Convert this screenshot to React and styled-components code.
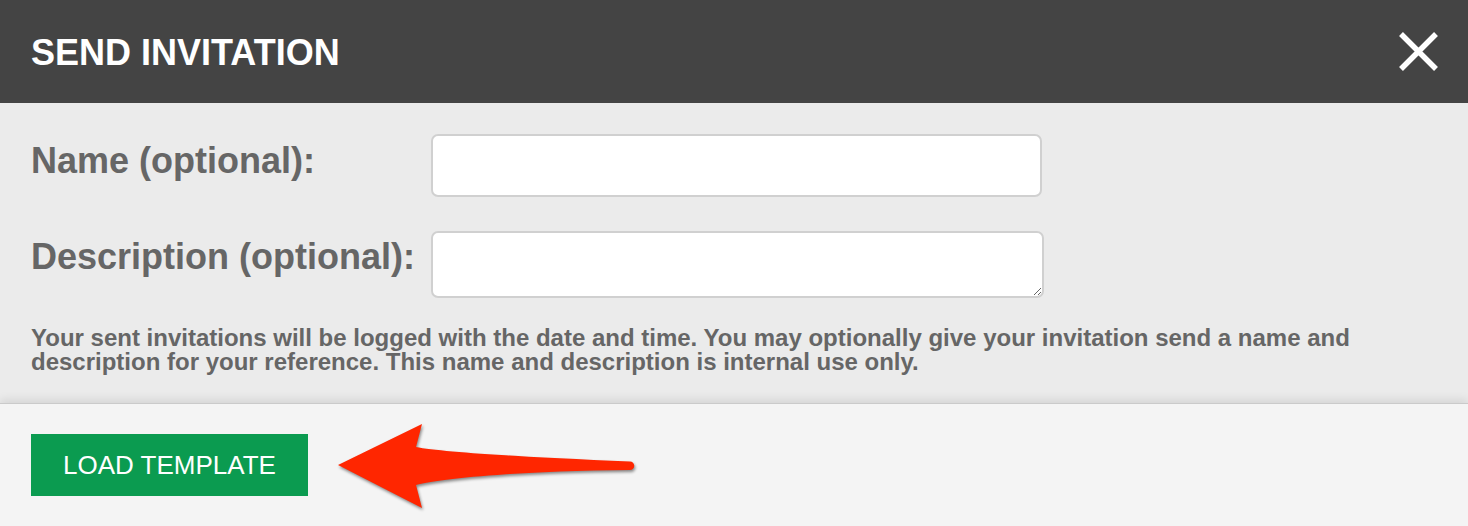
import React from 'react';
import styled, { createGlobalStyle } from 'styled-components';

const GlobalStyle = createGlobalStyle`
  html, body {
    margin: 0;
    padding: 0;
    background: #f4f4f4;
  }
  body {
    font-family: "Liberation Sans", Arial, Helvetica, sans-serif;
  }
`;

const Modal = styled.div`
  width: 1468px;
  height: 526px;
  display: flex;
  flex-direction: column;
  overflow: hidden;
`;

const Header = styled.header`
  height: 103px;
  flex-shrink: 0;
  box-sizing: border-box;
  padding: 3px 29px 0 31px;
  background: #444444;
  display: flex;
  align-items: center;
  justify-content: space-between;
`;

const Title = styled.h1`
  margin: 0;
  font-size: 36px;
  font-weight: 700;
  color: #ffffff;
`;

const CloseButton = styled.button`
  width: 41px;
  height: 41px;
  padding: 0;
  margin-top: -3px;
  border: none;
  background: transparent;
  cursor: pointer;
  display: flex;

  svg {
    display: block;
  }
`;

const Body = styled.section`
  flex-shrink: 0;
  background: #ebebeb;
  padding: 31px 31px 29px 31px;
`;

const Form = styled.div`
  display: grid;
  grid-template-columns: max-content auto;
  column-gap: 16px;
  row-gap: 34px;
  align-items: start;
`;

const Label = styled.label`
  font-size: 36px;
  font-weight: 700;
  color: #666666;
  padding-top: ${props => props.offset}px;
  line-height: 1.15;
`;

const fieldBase = `
  box-sizing: border-box;
  border: 2px solid #d0d0d0;
  border-radius: 7px;
  background: #ffffff;
  font-family: "Liberation Sans", Arial, sans-serif;
  font-size: 20px;
  padding: 8px 12px;
  outline: none;
  margin: 0;
  display: block;
`;

const TextInput = styled.input`
  ${fieldBase}
  width: 611px;
  height: 63px;
`;

const TextArea = styled.textarea`
  ${fieldBase}
  width: 613px;
  height: 67px;
  resize: both;
`;

const HelpText = styled.p`
  margin: 28px 0 0 0;
  font-size: 24px;
  line-height: 24px;
  font-weight: 700;
  color: #666666;
`;

const Footer = styled.footer`
  flex: 1;
  background: #f4f4f4;
  border-top: 1px solid #cacaca;
  box-shadow: 0 -3px 9px rgba(0, 0, 0, 0.1);
  padding: 0 31px;
  display: flex;
  align-items: center;
  gap: 28px;
`;

const PrimaryButton = styled.button`
  width: 277px;
  height: 62px;
  border: none;
  border-radius: 0;
  background: #0b9b50;
  color: #ffffff;
  font-family: "Liberation Sans", Arial, sans-serif;
  font-size: 26px;
  font-weight: 400;
  text-transform: uppercase;
  cursor: pointer;
  padding: 0;
`;

const Arrow = styled.svg`
  width: 300px;
  height: 90px;
  display: block;
  filter: drop-shadow(1px 2px 1.5px rgba(0, 0, 0, 0.45));
`;

const CloseIcon = () => (
  <svg width="41" height="41" viewBox="0 0 41 41">
    <path d="M3 3 L38 38 M38 3 L3 38" stroke="#ffffff" strokeWidth="5.5" strokeLinecap="butt" />
  </svg>
);

const App = () => {
  return (
    <>
      <GlobalStyle />
      <Modal>
        <Header>
          <Title>SEND INVITATION</Title>
          <CloseButton aria-label="Close">
            <CloseIcon />
          </CloseButton>
        </Header>
        <Body>
          <Form>
            <Label offset={6} htmlFor="inv-name">Name (optional):</Label>
            <TextInput id="inv-name" type="text" />
            <Label offset={5} htmlFor="inv-desc">Description (optional):</Label>
            <TextArea id="inv-desc" />
          </Form>
          <HelpText>
            Your sent invitations will be logged with the date and time. You may optionally give your invitation send a name and description for your reference. This name and description is internal use only.
          </HelpText>
        </Body>
        <Footer>
          <PrimaryButton>Load Template</PrimaryButton>
          <Arrow viewBox="335 16 300 90">
            <path
              d="M337 61 L421 20 L415 43 C440 48 520 53 629 57.5 A4.25 4.25 0 0 1 629 66 C520 67 440 74 415 81 L421 104 Z"
              fill="#ff2600"
            />
          </Arrow>
        </Footer>
      </Modal>
    </>
  );
};

export default App;
